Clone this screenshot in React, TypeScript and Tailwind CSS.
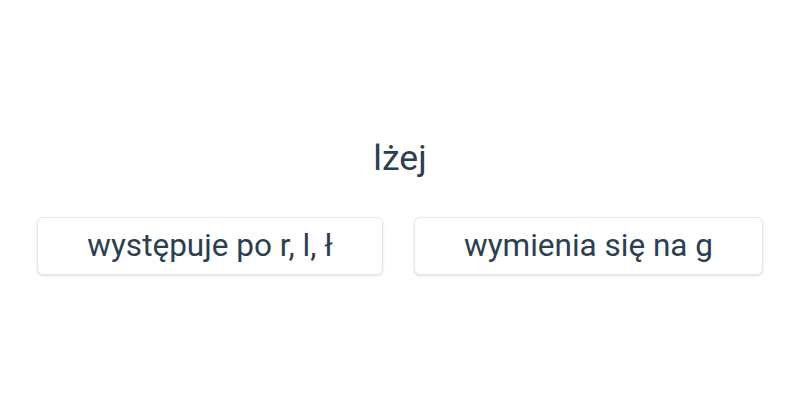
export default function App() {
  return (
    <div className="w-[800px] h-[400px] bg-white flex flex-col items-center pt-[140px]" style={{ fontFamily: 'Roboto, sans-serif' }}>
      <div className="text-[35.5px] text-[#2c3e50] leading-[36px]">lżej</div>
      <div className="grid grid-cols-[346px_349px] gap-[31px] w-full px-[37px] mt-[41px]">
        <button className="h-[58px] rounded-md border border-[#e5e7eb] bg-white shadow-sm text-[31.5px] text-[#2c3e50]">występuje po r, l, ł</button>
        <button className="h-[58px] rounded-md border border-[#e5e7eb] bg-white shadow-sm text-[31.5px] text-[#2c3e50]">wymienia się na g</button>
      </div>
    </div>
  );
}
